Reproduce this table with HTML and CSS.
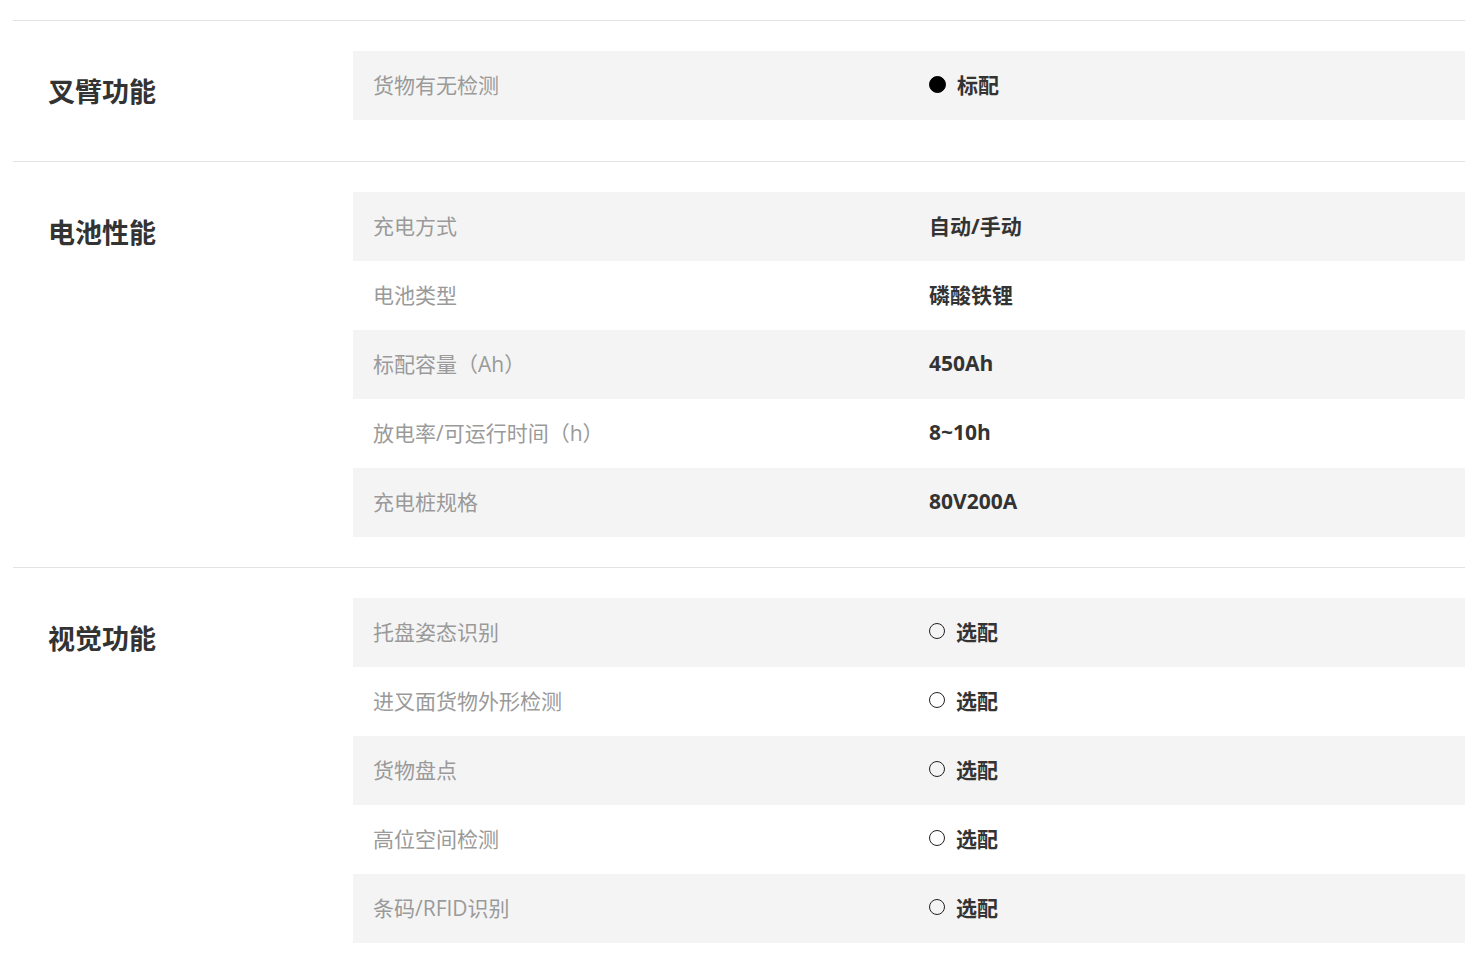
FILE: index.html
```html
<!DOCTYPE html>
<html lang="zh-CN">
<head>
<meta charset="utf-8">
<title>参数</title>
<link rel="stylesheet" href="styles.css">
</head>
<body>
<div class="specs">
  <section class="group">
    <h2 class="group-title">叉臂功能</h2>
    <div class="rows">
      <div class="row"><div class="label">货物有无检测</div><div class="value"><span class="dot filled"></span>标配</div></div>
    </div>
  </section>
  <section class="group">
    <h2 class="group-title">电池性能</h2>
    <div class="rows">
      <div class="row"><div class="label">充电方式</div><div class="value">自动/手动</div></div>
      <div class="row"><div class="label">电池类型</div><div class="value">磷酸铁锂</div></div>
      <div class="row"><div class="label">标配容量（Ah）</div><div class="value">450Ah</div></div>
      <div class="row"><div class="label">放电率/可运行时间（h）</div><div class="value">8~10h</div></div>
      <div class="row"><div class="label">充电桩规格</div><div class="value">80V200A</div></div>
    </div>
  </section>
  <section class="group">
    <h2 class="group-title">视觉功能</h2>
    <div class="rows">
      <div class="row"><div class="label">托盘姿态识别</div><div class="value"><span class="dot"></span>选配</div></div>
      <div class="row"><div class="label">进叉面货物外形检测</div><div class="value"><span class="dot"></span>选配</div></div>
      <div class="row"><div class="label">货物盘点</div><div class="value"><span class="dot"></span>选配</div></div>
      <div class="row"><div class="label">高位空间检测</div><div class="value"><span class="dot"></span>选配</div></div>
      <div class="row"><div class="label">条码/RFID识别</div><div class="value"><span class="dot"></span>选配</div></div>
    </div>
  </section>
</div>
</body>
</html>
```

FILE: styles.css
```css
html, body {
  margin: 0;
  padding: 0;
  background: #fff;
}
body {
  font-family: "Open Sans", "Noto Sans CJK SC", sans-serif;
  color: #333;
}
.specs {
  margin: 20px 8px 0 13px;
}
.group {
  display: flex;
  border-top: 1px solid #e3e3e3;
  padding: 30px 0;
}
.group-title {
  margin: 0;
  width: 340px;
  flex: none;
  padding: 21px 0 19px 35px;
  box-sizing: border-box;
  font-size: 27px;
  line-height: 40px;
  font-weight: 700;
  color: #333;
}
.rows {
  flex: 1;
  display: flex;
  flex-direction: column;
}
.row {
  display: flex;
  align-items: center;
  height: 69px;
  padding-bottom: 3px;
  box-sizing: border-box;
}
.row:nth-child(odd) {
  background: #f4f4f4;
}
.label {
  width: 576px;
  padding-left: 20px;
  box-sizing: border-box;
  font-size: 21px;
  color: #9a9a9a;
}
.value {
  display: flex;
  align-items: center;
  font-size: 21px;
  font-weight: 700;
  color: #333;
}
.dot {
  width: 16px;
  height: 16px;
  border-radius: 50%;
  border: 1px solid #222;
  box-sizing: border-box;
  margin-right: 11px;
}
.dot.filled {
  width: 17px;
  height: 17px;
  background: #000;
  border-color: #000;
  margin-right: 11px;
}
```
